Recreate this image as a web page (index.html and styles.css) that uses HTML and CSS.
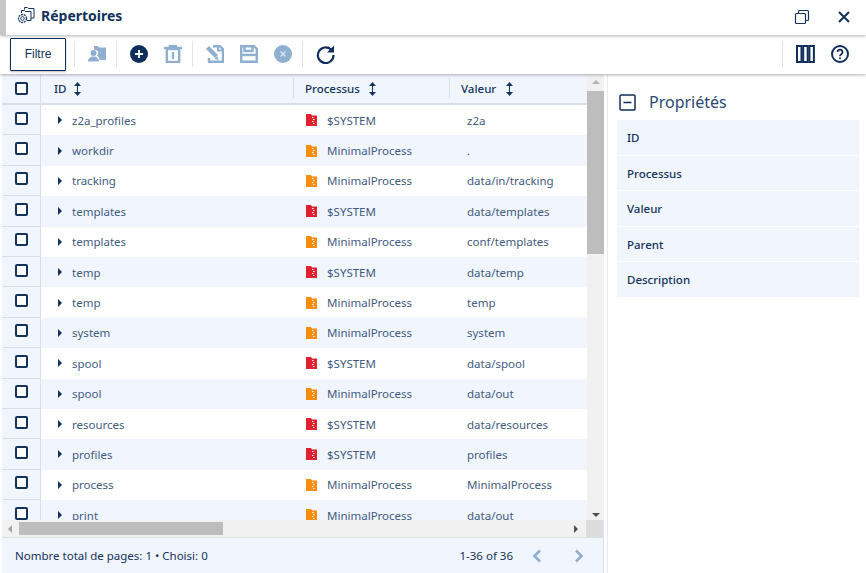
FILE: index.html
```html
<!DOCTYPE html>
<html lang="fr">
<head>
  <meta charset="UTF-8">
  <title>Répertoires</title>
  <link rel="stylesheet" href="styles.css">
</head>
<body>
  <header class="titlebar">
    <div class="title">
      <svg class="title-icon" width="18" height="18" viewBox="0 0 18 18" fill="none" stroke="#12335b" stroke-width="1">
        <path d="M7.500 3.500V1.500h3l1 1h5.500v9.500H14"/>
        <path d="M4.500 7V4.500h3l1 1h5.500v9h-4"/>
        <circle cx="5.500" cy="12.500" r="4" stroke-width="1.300" stroke-dasharray="2 .8"/>
        <circle cx="5.500" cy="12.500" r="1.800"/>
      </svg>
      <span>Répertoires</span>
    </div>
    <div class="window-btns">
      <svg width="16" height="16" viewBox="0 0 16 16" fill="none" stroke="#12335b" stroke-width="1.200">
        <rect x="1.500" y="4.500" width="10" height="10" rx="1"/>
        <path d="M4.500 4.500V2.500a1 1 0 0 1 1-1h8a1 1 0 0 1 1 1v8a1 1 0 0 1-1 1h-2"/>
      </svg>
      <svg width="16" height="16" viewBox="0 0 16 16" fill="none" stroke="#12335b" stroke-width="2">
        <path d="M3 3l10 10M13 3L3 13"/>
      </svg>
    </div>
  </header>

  <nav class="toolbar">
    <button class="filter-btn">Filtre</button>
    <span class="sep first"></span>
    <svg class="tool" width="18" height="18" viewBox="0 0 18 18" fill="#8fafd0">
      <path d="M6 1h4l1 1.500h7V15h-6.500c0-2-1-3.500-2.500-4.500 1-1 1.500-2 1.300-3.500C9.700 5.500 8 4.500 6 4.700z"/>
      <circle cx="5.500" cy="8" r="3"/>
      <path d="M0 16.500c0-3 2.500-5 5.500-5s5.500 2 5.500 5z"/>
    </svg>
    <span class="sep"></span>
    <svg class="tool" width="18" height="18" viewBox="0 0 18 18">
      <circle cx="9" cy="9" r="9" fill="#0f2f5a"/>
      <path d="M9 5v8M5 9h8" stroke="#fff" stroke-width="1.800"/>
    </svg>
    <svg class="tool" width="18" height="18" viewBox="0 0 18 18" fill="none" stroke="#8fafd0" stroke-width="2.400">
      <path d="M0 3h18" />
      <path d="M6 3V1h6v2"/>
      <rect x="2.800" y="4" width="12.400" height="13"/>
      <path d="M9 7v7"/>
    </svg>
    <span class="sep"></span>
    <svg class="tool" width="18" height="18" viewBox="0 0 18 18" fill="none">
      <path d="M7 1.200h7l3 3v12.600H3V13" stroke="#8fafd0" stroke-width="2.400"/>
      <path d="M12 1v4.500h5" stroke="#8fafd0" stroke-width="2"/>
      <path d="M1.500 2.500l9 9" stroke="#8fafd0" stroke-width="4.200"/>
      <path d="M8.500 14l4 1-1-4z" fill="#8fafd0"/>
    </svg>
    <svg class="tool" width="18" height="18" viewBox="0 0 18 18" fill="none" stroke="#8fafd0" stroke-width="2.400">
      <path d="M1.200 1.200h12.800l2.800 2.800v12.800H1.200z"/>
      <path d="M4.500 1v5h8V1M1 10h16"/>
    </svg>
    <svg class="tool" width="18" height="18" viewBox="0 0 18 18">
      <circle cx="9" cy="9" r="9" fill="#8fafd0"/>
      <path d="M6.500 6.500l5 5M11.500 6.500l-5 5" stroke="#dfe8f2" stroke-width="1.200"/>
    </svg>
    <span class="sep"></span>
    <svg class="tool" width="19" height="19" viewBox="0 0 19 19" fill="none" stroke="#0f2f5a" stroke-width="2.200">
      <path d="M15 4.500A7.800 7.800 0 1 0 17.500 10"/>
      <path d="M18 .500v7h-7z" fill="#0f2f5a" stroke="none"/>
    </svg>
    <span class="spacer"></span>
    <span class="sep"></span>
    <svg class="tool" width="19" height="18" viewBox="0 0 19 18" fill="none" stroke="#0f2f5a" stroke-width="2">
      <rect x="1" y="1" width="4.500" height="16"/>
      <rect x="7.200" y="1" width="4.500" height="16"/>
      <rect x="13.400" y="1" width="4.500" height="16"/>
    </svg>
    <svg class="tool" width="18" height="18" viewBox="0 0 18 18" fill="none" stroke="#0f2f5a" stroke-width="2">
      <circle cx="9" cy="9" r="8"/>
      <path d="M6.500 7a2.500 2.500 0 1 1 3.800 2.200C9.300 9.800 9 10.300 9 11.200" stroke-width="1.800"/>
      <path d="M9 12.500v1.800" stroke-width="1.800"/>
    </svg>
  </nav>

  <main class="content">
    <section class="grid-panel">
      <div class="grid-top">
        <div class="grid-table">
          <div class="head-row">
            <div class="check-cell"><span class="checkbox"></span></div>
            <div class="head-cell col-id">ID <svg class="sort" width="7" height="14" viewBox="0 0 7 14"><path d="M3.500 0L7 4H0zM3.500 14L0 10h7z" fill="#12335b"/><path d="M3.500 3v8" stroke="#12335b"/></svg></div>
            <div class="head-cell col-proc">Processus <svg class="sort" width="7" height="14" viewBox="0 0 7 14"><path d="M3.500 0L7 4H0zM3.500 14L0 10h7z" fill="#12335b"/><path d="M3.500 3v8" stroke="#12335b"/></svg></div>
            <div class="head-cell col-val">Valeur <svg class="sort" width="7" height="14" viewBox="0 0 7 14"><path d="M3.500 0L7 4H0zM3.500 14L0 10h7z" fill="#12335b"/><path d="M3.500 3v8" stroke="#12335b"/></svg></div>
          </div>
          <div class="rows" id="rows"></div>
        </div>
        <div class="vscroll">
          <span class="arrow-up"></span>
          <span class="vthumb"></span>
          <span class="vtrack"></span>
          <span class="arrow-down"></span>
        </div>
      </div>
      <div class="hscroll">
        <span class="arrow-left"></span>
        <span class="hthumb"></span>
        <span class="htrack"></span>
        <span class="arrow-right"></span>
        <span class="corner"></span>
      </div>
      <footer class="pager">
        <span>Nombre total de pages: 1 • Choisi: 0</span>
        <div class="pager-right">
          <span class="count">1-36 of 36</span>
          <svg width="10" height="14" viewBox="0 0 10 14" fill="none" stroke="#8fafd0" stroke-width="2.600"><path d="M8 1.500L2.500 7 8 12.500"/></svg>
          <svg width="10" height="14" viewBox="0 0 10 14" fill="none" stroke="#8fafd0" stroke-width="2.600"><path d="M2 1.500L7.500 7 2 12.500"/></svg>
        </div>
      </footer>
    </section>

    <aside class="props">
      <div class="props-head">
        <svg width="17" height="17" viewBox="0 0 17 17" fill="none" stroke="#0f2f5a" stroke-width="1.500">
          <rect x="1" y="1" width="15" height="15" rx="1"/>
          <path d="M4.500 8.500h8"/>
        </svg>
        <span class="props-title">Propriétés</span>
      </div>
      <ul class="props-list">
        <li>ID</li>
        <li>Processus</li>
        <li>Valeur</li>
        <li>Parent</li>
        <li>Description</li>
      </ul>
    </aside>
  </main>

  <script>
    const data = [
      ['z2a_profiles', 'sys', 'z2a'],
      ['workdir', 'min', '.'],
      ['tracking', 'min', 'data/in/tracking'],
      ['templates', 'sys', 'data/templates'],
      ['templates', 'min', 'conf/templates'],
      ['temp', 'sys', 'data/temp'],
      ['temp', 'min', 'temp'],
      ['system', 'min', 'system'],
      ['spool', 'sys', 'data/spool'],
      ['spool', 'min', 'data/out'],
      ['resources', 'sys', 'data/resources'],
      ['profiles', 'sys', 'profiles'],
      ['process', 'min', 'MinimalProcess'],
      ['print', 'min', 'data/out']
    ];

    const rows = document.getElementById('rows');
    rows.innerHTML = data.map(([id, kind, value]) => `
      <div class="row">
        <div class="check-cell"><span class="checkbox"></span></div>
        <div class="cell col-id"><span class="caret"></span>${id}</div>
        <div class="cell col-proc">
          <svg class="zip ${kind}" width="11" height="12" viewBox="0 0 11 12">
            <path d="M0 0h5l1 1.500h5V12H0z"/>
            <path d="M6 3h1.500v1H6zM7 5h1.500v1H7zM6 7h1.500v1H6zM7 9h1.500v1H7z" fill="#fff"/>
          </svg>
          ${kind === 'sys' ? '$SYSTEM' : 'MinimalProcess'}
        </div>
        <div class="cell col-val">${value}</div>
      </div>`).join('');
  </script>
</body>
</html>
```

FILE: styles.css
```css
* {
  box-sizing: border-box;
}
html, body {
  height: 100%;
}
body {
  margin: 0;
  background: #fff;
  color: #12335b;
  font-family: "Noto Sans", sans-serif;
  font-size: 11.5px;
  overflow: hidden;
  display: flex;
  flex-direction: column;
}
.titlebar {
  height: 35px;
  flex: none;
  display: flex;
  justify-content: space-between;
  align-items: center;
  padding: 0 14px 1px 17px;
  border-left: 6px solid #c9c7c5;
  box-shadow: 0 1px 3px rgba(0, 0, 0, 0.3);
  position: relative;
  z-index: 3;
  background: #fff;
}
.title {
  display: flex;
  align-items: center;
  gap: 6px;
  font-size: 14px;
  font-weight: 700;
  margin-left: -6px;
  padding-bottom: 4px;
}
.window-btns {
  display: flex;
  align-items: center;
  gap: 26px;
}
.toolbar {
  height: 39px;
  flex: none;
  display: flex;
  align-items: center;
  padding: 0 17px 1px 10px;
  background: #fff;
  box-shadow: 0 1px 3px rgba(0, 0, 0, 0.3);
  position: relative;
  z-index: 2;
}
.filter-btn {
  width: 56px;
  height: 33px;
  background: #fff;
  border: 1px solid #0f2f5a;
  border-radius: 1px;
  color: #12335b;
  font-family: "Liberation Sans", sans-serif;
  font-size: 12px;
  padding: 0;
  box-shadow: 0 1px 2px rgba(0, 0, 0, 0.25);
}
.sep {
  width: 1px;
  height: 26px;
  background: #dfe4ea;
  margin: 0 13px 0 10px;
  flex: none;
}
.sep.first {
  margin-left: 8px;
}
.tool {
  flex: none;
}
.tool + .tool {
  margin-left: 16px;
}
.spacer {
  flex: 1;
}
.content {
  flex: 1;
  min-height: 0;
  display: flex;
}
.grid-panel {
  width: 604px;
  flex: none;
  display: flex;
  flex-direction: column;
  padding-left: 2px;
  border-right: 1px solid #dbe3ee;
}
.grid-top {
  height: 446px;
  flex: none;
  display: flex;
}
.grid-table {
  width: 585px;
  flex: none;
  display: flex;
  flex-direction: column;
  overflow: hidden;
}
.head-row {
  height: 31px;
  flex: none;
  display: flex;
  background: #f1f5fd;
  border-bottom: 2px solid #d9dfe7;
}
.check-cell {
  width: 39px;
  flex: none;
  display: flex;
  justify-content: center;
  align-items: center;
  background: #f1f5fd;
  border-right: 1px solid #d9dfe7;
}
.checkbox {
  width: 13px;
  height: 13px;
  border: 2px solid #12335b;
  border-radius: 2px;
  background: #fff;
}
.head-cell {
  display: flex;
  align-items: center;
  gap: 8px;
  font-weight: 500;
  position: relative;
}
.head-cell::after {
  content: "";
  position: absolute;
  right: 0;
  top: 4px;
  bottom: 5px;
  width: 1px;
  background: #d9dfe7;
}
.head-cell.col-val::after {
  display: none;
}
.head-cell.col-id {
  padding-left: 13px;
}
.head-cell.col-proc {
  padding-left: 11px;
  gap: 9px;
}
.head-cell.col-val {
  padding-left: 11px;
  gap: 10px;
}
.col-id {
  width: 253px;
  flex: none;
}
.col-proc {
  width: 156px;
  flex: none;
}
.col-val {
  flex: 1;
}
.row {
  height: 30.4px;
  display: flex;
  background: #fff;
}
.row:nth-child(even) {
  background: #f1f5fd;
}
.row .check-cell {
  border-bottom: 1px solid #d9dfe7;
}
.row .checkbox {
  margin-bottom: 3px;
}
.cell {
  display: flex;
  align-items: center;
  color: #3f5c80;
  white-space: nowrap;
}
.cell.col-id {
  padding-left: 17px;
}
.cell.col-proc {
  padding-left: 12px;
}
.cell.col-val {
  padding-left: 17px;
}
.caret {
  width: 0;
  height: 0;
  border-left: 4px solid #12335b;
  border-top: 4px solid transparent;
  border-bottom: 4px solid transparent;
  margin-right: 10px;
}
.zip {
  margin-right: 10px;
  flex: none;
}
.zip.sys {
  fill: #e0202f;
}
.zip.min {
  fill: #f78d0d;
}
.vscroll {
  width: 17px;
  flex: none;
  display: flex;
  flex-direction: column;
  align-items: center;
  background: #f1f1f1;
  padding-bottom: 3px;
}
.arrow-up {
  width: 0;
  height: 0;
  border-left: 4px solid transparent;
  border-right: 4px solid transparent;
  border-bottom: 4px solid #b4b4b4;
  margin: 6px 0 7px;
}
.vthumb {
  width: 100%;
  height: 163px;
  background: #bdbdbd;
  flex: none;
}
.vtrack {
  flex: 1;
}
.arrow-down {
  width: 0;
  height: 0;
  border-left: 4px solid transparent;
  border-right: 4px solid transparent;
  border-top: 4px solid #505050;
}
.hscroll {
  height: 18px;
  flex: none;
  display: flex;
  align-items: center;
  background: #f1f1f1;
  border-bottom: 1px solid #d9dfe7;
}
.arrow-left {
  width: 0;
  height: 0;
  border-top: 4px solid transparent;
  border-bottom: 4px solid transparent;
  border-right: 4px solid #a3a3a3;
  margin: 0 7px 0 6px;
}
.hthumb {
  width: 204px;
  height: 13px;
  background: #bdbdbd;
  flex: none;
}
.htrack {
  flex: 1;
}
.arrow-right {
  width: 0;
  height: 0;
  border-top: 4px solid transparent;
  border-bottom: 4px solid transparent;
  border-left: 4px solid #505050;
  margin-right: 8px;
}
.corner {
  width: 17px;
  height: 100%;
  background: #dcdcdc;
}
.pager {
  height: 35px;
  flex: none;
  display: flex;
  justify-content: space-between;
  align-items: center;
  background: #f1f5fd;
  padding: 0 19px 0 13px;
}
.pager-right {
  display: flex;
  align-items: center;
  gap: 32px;
}
.pager-right .count {
  margin-right: -13px;
}
.props {
  flex: 1;
  margin-left: 3px;
  border-left: 1px solid #e6ebf3;
  padding: 0 7px 0 9px;
}
.props-head {
  height: 46px;
  display: flex;
  align-items: center;
  gap: 13px;
  padding: 11px 0 0 2px;
  font-size: 16px;
  color: #2a4a70;
}
.props-title {
  margin-top: -2px;
}
.props-list {
  list-style: none;
  margin: 0;
  padding: 0;
}
.props-list li {
  height: 35.5px;
  display: flex;
  align-items: center;
  padding: 1px 0 0 10px;
  background: #f1f5fd;
  border-bottom: 1px solid #fff;
  font-weight: 500;
}
```
